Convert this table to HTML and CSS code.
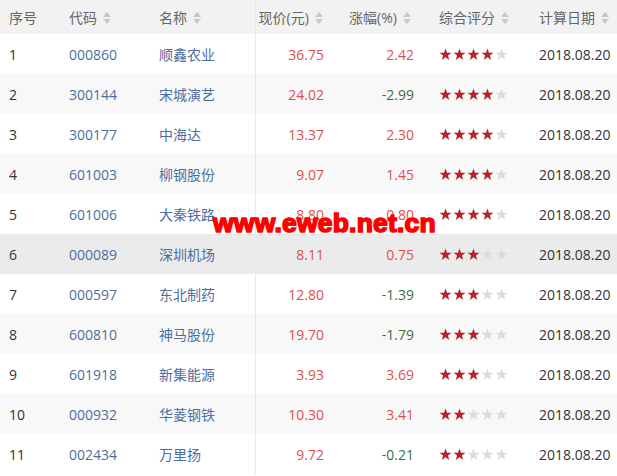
FILE: index.html
```html
<!DOCTYPE html>
<html lang="zh-CN">
<head>
<meta charset="utf-8">
<title>股票评分</title>
<link rel="stylesheet" href="styles.css">
</head>
<body>
<svg class="defs" width="0" height="0" aria-hidden="true">
  <symbol id="star" viewBox="0 0 14 14"><polygon points="7,0.5 8.62,5.08 13.47,5.2 9.62,8.15 11,12.8 7,10.05 3,12.8 4.38,8.15 0.53,5.2 5.38,5.08"/></symbol>
  <symbol id="sort" viewBox="0 0 8 12"><polygon points="4,0 8,5 0,5"/><polygon points="0,7 8,7 4,12"/></symbol>
</svg>
<div class="wrap">
<table class="grid">
  <colgroup>
    <col class="c1"><col class="c2"><col class="c3"><col class="c4"><col class="c5"><col class="c6"><col class="c7">
  </colgroup>
  <thead>
    <tr>
      <th>序号</th>
      <th>代码<svg class="sort"><use href="#sort"/></svg></th>
      <th class="split">名称<svg class="sort"><use href="#sort"/></svg></th>
      <th class="after">现价(元)<svg class="sort"><use href="#sort"/></svg></th>
      <th>涨幅(%)<svg class="sort"><use href="#sort"/></svg></th>
      <th>综合评分<svg class="sort"><use href="#sort"/></svg></th>
      <th>计算日期<svg class="sort"><use href="#sort"/></svg></th>
    </tr>
  </thead>
  <tbody>
    <tr><td>1</td><td class="link">000860</td><td class="link split">顺鑫农业</td><td class="num up after">36.75</td><td class="num up">2.42</td><td><span class="stars"><svg class="on"><use href="#star"/></svg><svg class="on"><use href="#star"/></svg><svg class="on"><use href="#star"/></svg><svg class="on"><use href="#star"/></svg><svg><use href="#star"/></svg></span></td><td>2018.08.20</td></tr>
    <tr><td>2</td><td class="link">300144</td><td class="link split">宋城演艺</td><td class="num up after">24.02</td><td class="num down">-2.99</td><td><span class="stars"><svg class="on"><use href="#star"/></svg><svg class="on"><use href="#star"/></svg><svg class="on"><use href="#star"/></svg><svg class="on"><use href="#star"/></svg><svg><use href="#star"/></svg></span></td><td>2018.08.20</td></tr>
    <tr><td>3</td><td class="link">300177</td><td class="link split">中海达</td><td class="num up after">13.37</td><td class="num up">2.30</td><td><span class="stars"><svg class="on"><use href="#star"/></svg><svg class="on"><use href="#star"/></svg><svg class="on"><use href="#star"/></svg><svg class="on"><use href="#star"/></svg><svg><use href="#star"/></svg></span></td><td>2018.08.20</td></tr>
    <tr><td>4</td><td class="link">601003</td><td class="link split">柳钢股份</td><td class="num up after">9.07</td><td class="num up">1.45</td><td><span class="stars"><svg class="on"><use href="#star"/></svg><svg class="on"><use href="#star"/></svg><svg class="on"><use href="#star"/></svg><svg class="on"><use href="#star"/></svg><svg><use href="#star"/></svg></span></td><td>2018.08.20</td></tr>
    <tr><td>5</td><td class="link">601006</td><td class="link split">大秦铁路</td><td class="num up after">8.80</td><td class="num up">0.80</td><td><span class="stars"><svg class="on"><use href="#star"/></svg><svg class="on"><use href="#star"/></svg><svg class="on"><use href="#star"/></svg><svg class="on"><use href="#star"/></svg><svg><use href="#star"/></svg></span></td><td>2018.08.20</td></tr>
    <tr class="hover"><td>6</td><td class="link">000089</td><td class="link split">深圳机场</td><td class="num up after">8.11</td><td class="num up">0.75</td><td><span class="stars"><svg class="on"><use href="#star"/></svg><svg class="on"><use href="#star"/></svg><svg class="on"><use href="#star"/></svg><svg><use href="#star"/></svg><svg><use href="#star"/></svg></span></td><td>2018.08.20</td></tr>
    <tr><td>7</td><td class="link">000597</td><td class="link split">东北制药</td><td class="num up after">12.80</td><td class="num down">-1.39</td><td><span class="stars"><svg class="on"><use href="#star"/></svg><svg class="on"><use href="#star"/></svg><svg class="on"><use href="#star"/></svg><svg><use href="#star"/></svg><svg><use href="#star"/></svg></span></td><td>2018.08.20</td></tr>
    <tr><td>8</td><td class="link">600810</td><td class="link split">神马股份</td><td class="num up after">19.70</td><td class="num down">-1.79</td><td><span class="stars"><svg class="on"><use href="#star"/></svg><svg class="on"><use href="#star"/></svg><svg class="on"><use href="#star"/></svg><svg><use href="#star"/></svg><svg><use href="#star"/></svg></span></td><td>2018.08.20</td></tr>
    <tr><td>9</td><td class="link">601918</td><td class="link split">新集能源</td><td class="num up after">3.93</td><td class="num up">3.69</td><td><span class="stars"><svg class="on"><use href="#star"/></svg><svg class="on"><use href="#star"/></svg><svg class="on"><use href="#star"/></svg><svg><use href="#star"/></svg><svg><use href="#star"/></svg></span></td><td>2018.08.20</td></tr>
    <tr><td>10</td><td class="link">000932</td><td class="link split">华菱钢铁</td><td class="num up after">10.30</td><td class="num up">3.41</td><td><span class="stars"><svg class="on"><use href="#star"/></svg><svg class="on"><use href="#star"/></svg><svg><use href="#star"/></svg><svg><use href="#star"/></svg><svg><use href="#star"/></svg></span></td><td>2018.08.20</td></tr>
    <tr><td>11</td><td class="link">002434</td><td class="link split">万里扬</td><td class="num up after">9.72</td><td class="num down">-0.21</td><td><span class="stars"><svg class="on"><use href="#star"/></svg><svg class="on"><use href="#star"/></svg><svg><use href="#star"/></svg><svg><use href="#star"/></svg><svg><use href="#star"/></svg></span></td><td>2018.08.20</td></tr>
  </tbody>
</table>
<div class="watermark">www.eweb.net.cn</div>
</div>
</body>
</html>
```
FILE: styles.css
```css
html, body {
  margin: 0;
  padding: 0;
  background: #fff;
  overflow: hidden;
}
body {
  font-family: "Open Sans", "Noto Sans CJK SC", "Liberation Sans", sans-serif;
  font-size: 14px;
  color: #333;
}
.defs {
  position: absolute;
  width: 0;
  height: 0;
}
.wrap {
  position: relative;
  width: 630px;
}
.grid {
  width: 630px;
  table-layout: fixed;
  border-collapse: collapse;
}
.c1 { width: 60px; }
.c2 { width: 90px; }
.c3 { width: 105px; }
.c4 { width: 85px; }
.c5 { width: 90px; }
.c6 { width: 100px; }
.c7 { width: 100px; }
.grid th {
  height: 34px;
  padding: 0 0 0 9px;
  background: #f2f2f2;
  color: #666;
  font-weight: normal;
  text-align: left;
  white-space: nowrap;
}
.grid td {
  height: 40px;
  padding: 0 0 0 9px;
  white-space: nowrap;
}
.grid tbody tr:nth-child(even) { background: #f8f8f8; }
.grid tbody tr.hover { background: #ebebeb; }
.grid .split { border-right: 1px solid #e8e8e8; }
.grid .after { padding-left: 3px; }
.grid td.num {
  text-align: right;
  padding-right: 16px;
}
.link { color: #4e6e9e; }
.up { color: #e05050; }
.down { color: #3f6f3f; }
.sort {
  width: 8px;
  height: 12px;
  margin-left: 6px;
  vertical-align: -1px;
  fill: #c6c6c6;
}
.stars {
  display: inline-flex;
  gap: 1px;
  vertical-align: -1px;
}
.stars svg {
  width: 13px;
  height: 13px;
  fill: #dcdcdc;
}
.stars svg.on { fill: #b8232a; }
.watermark {
  position: absolute;
  left: 213px;
  top: 210px;
  font-family: "Liberation Sans", Arial, sans-serif;
  font-size: 26.5px;
  line-height: 26px;
  font-weight: bold;
  letter-spacing: 0.2px;
  color: #ff0000;
  -webkit-text-stroke: 1.6px #ff0000;
  white-space: nowrap;
}
```
